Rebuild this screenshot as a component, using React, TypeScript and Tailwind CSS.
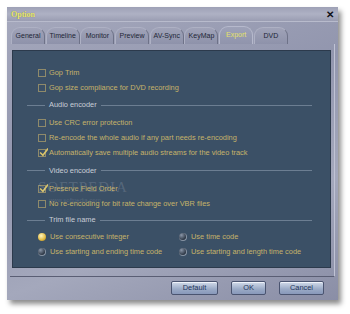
import React from "react";

const tabs = ["General", "Timeline", "Monitor", "Preview", "AV-Sync", "KeyMap", "Export", "DVD"];

function CheckRow({ label, checked }: { label: string; checked?: boolean }) {
  return (
    <div className="h-[15px] flex items-center pl-[25px]">
      <div className="w-[8px] h-[8px] border border-[#8f8a6a] relative shrink-0">
        {checked && (
          <svg viewBox="0 0 8 8" className="absolute -top-[2px] left-0 w-[9px] h-[9px]">
            <path d="M1 4 L3.5 6.5 L8 0.5" stroke="#d9c46a" strokeWidth="1.4" fill="none" />
          </svg>
        )}
      </div>
      <span className="ml-[3px] text-[#c6b36a]">{label}</span>
    </div>
  );
}

function Radio({ label, on }: { label: string; on?: boolean }) {
  return (
    <div className="h-[15px] flex items-center">
      <div
        className={
          on
            ? "w-[8px] h-[8px] rounded-full bg-[radial-gradient(circle_at_40%_35%,#fff6c0,#e0b840_60%,#8a6a20)] shrink-0"
            : "w-[8px] h-[8px] rounded-full bg-[radial-gradient(circle_at_35%_30%,#8a96a8,#303a48_70%)] border-r border-b border-[#8894a4] shrink-0"
        }
      />
      <span className="ml-[4px] text-[#c6b36a]">{label}</span>
    </div>
  );
}

function Section({ title, h }: { title: string; h: string }) {
  return (
    <div className={`flex items-center pl-[14px] pr-[18px] ${h}`}>
      <div className="w-[18px] h-px bg-[#6c7e92]" />
      <span className="px-[4px] text-[#c9ced8]">{title}</span>
      <div className="flex-1 h-px bg-[#6c7e92]" />
    </div>
  );
}

function Btn({ label, w }: { label: string; w: string }) {
  return (
    <div
      className={`${w} h-[14px] flex items-center justify-center border border-[#4a5470] rounded-[2px] bg-[linear-gradient(#d2dbea,#9aaac6_60%,#8898ba)] text-[#24345a] shadow-[inset_0_1px_0_#eef2fa]`}
    >
      {label}
    </div>
  );
}

export default function App() {
  return (
    <div className="w-[350px] h-[314px] bg-white pl-[7px] pt-[7px] overflow-hidden text-[7.4px] font-['Liberation_Sans',Arial,sans-serif]">
      <div className="w-[331px] h-[293px] flex flex-col bg-[linear-gradient(160deg,#a6a9bd,#9296ae_40%,#a4a8bc_70%,#8a8ea6)] shadow-[3px_4px_5px_rgba(0,0,0,0.45)]">
        {/* title bar */}
        <div className="h-[15px] flex items-center justify-between pl-[4px] pr-[4px] pt-[2px] bg-[linear-gradient(#9ea1b6,#aeb1c4_50%,#9a9db2)] border-b border-[#b8bbcc]">
          <span className="font-['Liberation_Serif',serif] font-bold text-[8px] text-[#ecec70] [text-shadow:0_0_1px_#666]">Option</span>
          <span className="text-[10px] font-bold text-[#101018] leading-none">✕</span>
        </div>

        {/* tabs */}
        <div className="h-[21px] flex items-end pl-[4px] mt-[1px] text-[7px]">
          {tabs.map((t) => (
            <div
              key={t}
              className={
                t === "Export"
                  ? "w-[34px] h-[18px] flex items-center justify-center whitespace-nowrap rounded-t-[9px] border-t border-l border-r border-[#b6b9cc] bg-[linear-gradient(#9ea2b8,#9094ac)] text-[#e6e26a] mr-[0.7px]"
                  : "w-[34px] h-[17px] flex items-center justify-center whitespace-nowrap rounded-t-[9px] border-t border-l border-r border-[#aeb1c4] border-r-[#6e7288] bg-[linear-gradient(#a0a3b8,#8e92aa)] text-[#1e2636] mr-[0.7px]"
              }
            >
              {t}
            </div>
          ))}
        </div>

        {/* page */}
        <div className="ml-[3px] w-[325px] h-[233px] pt-[6px] pl-[2px] pr-[4px] pb-[8px] border-b border-[#5a5e74] border-r border-r-[#c0c3d4]">
          <div className="w-[319px] h-full bg-[#3b5066] border border-[#2c3a4c] relative pt-[14px]">
            <CheckRow label="Gop Trim" />
            <CheckRow label="Gop size compliance for DVD recording" />
            <Section title="Audio encoder" h="h-[20px]" />
            <CheckRow label="Use CRC error protection" />
            <CheckRow label="Re-encode the whole audio if any part needs re-encoding" />
            <CheckRow label="Automatically save multiple audio streams for the video track" checked />
            <Section title="Video encoder" h="h-[21px]" />
            <CheckRow label="Preserve Field Order" checked />
            <CheckRow label="No re-encoding for bit rate change over VBR files" />
            <Section title="Trim file name" h="h-[18px]" />
            <div className="grid grid-cols-[141px_1fr] pl-[25px]">
              <Radio label="Use consecutive integer" on />
              <Radio label="Use time code" />
              <Radio label="Use starting and ending time code" />
              <Radio label="Use starting and length time code" />
            </div>

            {/* watermark */}
            <div className="absolute left-[25px] top-[129px] text-[15px] tracking-[1px] font-['Liberation_Serif',serif] text-white/15 leading-none">
              SOFTPEDIA
            </div>
            <div className="absolute left-[36px] top-[146px] text-[6px] text-white/15 leading-none">www.softpedia.com</div>
          </div>
        </div>

        {/* buttons */}
        <div className="flex-1 flex items-center justify-end pr-[14px] gap-[13px] pb-[1px]">
          <Btn label="Default" w="w-[47px]" />
          <Btn label="OK" w="w-[35px]" />
          <Btn label="Cancel" w="w-[45px]" />
        </div>
      </div>
    </div>
  );
}
